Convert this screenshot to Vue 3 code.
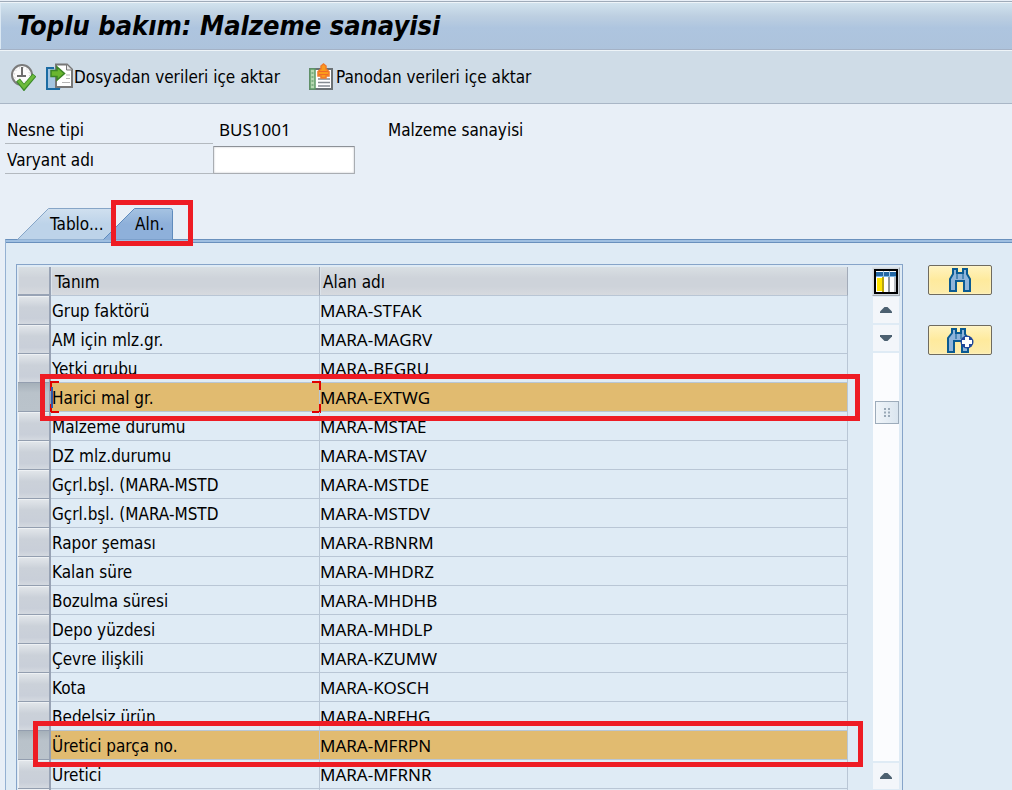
<script setup>
import { ref } from 'vue'

const variant = ref('')

const rows = [
  { name: 'Grup faktörü', field: 'MARA-STFAK' },
  { name: 'AM için mlz.gr.', field: 'MARA-MAGRV' },
  { name: 'Yetki grubu', field: 'MARA-BEGRU' },
  { name: 'Harici mal gr.', field: 'MARA-EXTWG', selected: true, focused: true, mark: 'mark-first' },
  { name: 'Malzeme durumu', field: 'MARA-MSTAE' },
  { name: 'DZ mlz.durumu', field: 'MARA-MSTAV' },
  { name: 'Gçrl.bşl. (MARA-MSTD', field: 'MARA-MSTDE' },
  { name: 'Gçrl.bşl. (MARA-MSTD', field: 'MARA-MSTDV' },
  { name: 'Rapor şeması', field: 'MARA-RBNRM' },
  { name: 'Kalan süre', field: 'MARA-MHDRZ' },
  { name: 'Bozulma süresi', field: 'MARA-MHDHB' },
  { name: 'Depo yüzdesi', field: 'MARA-MHDLP' },
  { name: 'Çevre ilişkili', field: 'MARA-KZUMW' },
  { name: 'Kota', field: 'MARA-KOSCH' },
  { name: 'Bedelsiz ürün', field: 'MARA-NRFHG' },
  { name: 'Üretici parça no.', field: 'MARA-MFRPN', selected: true, mark: 'mark-second' },
  { name: 'Üretici', field: 'MARA-MFRNR' },
  { name: '', field: '' }
]
</script>

<template>
  <div class="page">
    <header class="title-bar">
      <h1>Toplu bakım: Malzeme sanayisi</h1>
    </header>

    <div class="toolbar">
      <button type="button" class="tool" aria-label="Yürüt">
        <svg width="26" height="28" viewBox="0 0 26 28">
          <circle cx="12" cy="12" r="10" fill="#fbfbfb" stroke="#7b7b7b" stroke-width="2" />
          <circle cx="12" cy="12" r="7.500" fill="none" stroke="#c4c4c4" stroke-width="1" stroke-dasharray="1 3" />
          <path d="M12 4v9M7 13h9" fill="none" stroke="#6d6d6d" stroke-width="2" />
          <path d="M8 17l6 7.500L24.500 12" fill="none" stroke="#3b8a2b" stroke-width="5" />
          <path d="M8.500 17.500l5.500 6.500L24 12.500" fill="none" stroke="#6cbb3c" stroke-width="3" />
        </svg>
      </button>
      <button type="button" class="tool import-file">
        <svg width="28" height="28" viewBox="0 0 28 28">
          <path d="M1 5h9v19h5v2H1z" fill="#a5c6e2" />
          <path d="M8 5H1v21h13" fill="none" stroke="#1b6ba3" stroke-width="2" />
          <path d="M10 1.500h11l5 5V24H10z" fill="#fff" stroke="#777" stroke-width="2" />
          <path d="M20.500 1.500V7H26" fill="#e8e8e8" stroke="#777" stroke-width="1" />
          <path d="M20 12h4M20 15.500h4M16 19.500h8" stroke="#b5b5b5" stroke-width="1" />
          <path d="M5 7.500h6V4l7.500 6.500L11 17v-3.500H5z" fill="#6ab62f" stroke="#3b8526" stroke-width="1.500" />
        </svg>
        <span>Dosyadan verileri içe aktar</span>
      </button>
      <button type="button" class="tool import-clip">
        <svg width="28" height="28" viewBox="0 0 28 28">
          <path d="M2 6h22v20H2z" fill="#fff" stroke="#6b7275" stroke-width="2" />
          <path d="M2 6h5v20H2z" fill="#b7d9b1" stroke="#5d9a66" stroke-width="1.500" />
          <path d="M3.500 10h2M3.500 14h2M3.500 18h2M3.500 22h2" stroke="#4d8b58" stroke-width="1" />
          <path d="M10 16h12M10 19.500h12M10 23h12" stroke="#858b91" stroke-width="1.500" />
          <path d="M10 13V8.500l3-2.500V3l2.500-2L18 3v3l3 2.500V13h-3v2h-5v-2z" fill="#fb9b1b" stroke="#f17a29" stroke-width="1.500" />
          <path d="M11 8.500h9M11 11.500h9" stroke="#f06b26" stroke-width="1" />
        </svg>
        <span>Panodan verileri içe aktar</span>
      </button>
    </div>

    <main>
      <section class="form">
        <div class="label">Nesne tipi</div>
        <div class="value code">BUS1001</div>
        <div class="desc">Malzeme sanayisi</div>
        <label class="label" for="variant">Varyant adı</label>
        <input id="variant" v-model="variant" class="text-box" type="text" />
      </section>

      <nav class="tabs">
        <button type="button" class="tab tab-tables">
          <svg class="tab-shape" width="97" height="32" viewBox="0 0 97 32">
            <defs>
              <linearGradient id="idle" x1="0" y1="0" x2="0" y2="1">
                <stop offset="0" stop-color="#d0e0ef" />
                <stop offset="0.5" stop-color="#bdd3e9" />
                <stop offset="1" stop-color="#bdd3e9" />
              </linearGradient>
            </defs>
            <path d="M0.500 31.500L31.500 0.500H96.500V31.500" fill="url(#idle)" stroke="#86a5c7" />
          </svg>
          <span>Tablo...</span>
        </button>
        <button type="button" class="tab tab-fields">
          <svg class="tab-shape" width="70" height="32" viewBox="0 0 70 32">
            <defs>
              <linearGradient id="active" x1="0" y1="0" x2="0" y2="1">
                <stop offset="0" stop-color="#a6c3e2" />
                <stop offset="0.5" stop-color="#8eb0da" />
                <stop offset="1" stop-color="#8eb0da" />
              </linearGradient>
            </defs>
            <path d="M0.500 31.500L31.500 0.500H67.500Q69.500 0.500 69.500 2.500V31.500" fill="url(#active)" stroke="#5f8bbd" />
          </svg>
          <span>Aln.</span>
          <i class="mark mark-tab"></i>
        </button>
      </nav>

      <section class="panel">
        <div class="frame">
          <table>
            <colgroup>
              <col class="col-select" />
              <col class="col-name" />
              <col />
            </colgroup>
            <thead>
              <tr>
                <th class="corner"></th>
                <th>Tanım</th>
                <th>Alan adı</th>
              </tr>
            </thead>
            <tbody>
              <tr v-for="(row, i) in rows" :key="i" :class="{ selected: row.selected }">
                <td class="select-cell">
                  <button type="button" class="row-select" aria-label="Satır seç"></button>
                </td>
                <td>
                  {{ row.name }}
                  <svg v-if="row.focused" class="focus" viewBox="0 0 271 32" width="271" height="32">
                    <path d="M9 1H1v9M1 23v8h8M262 1h8v8M270 23v8h-8" fill="none" stroke="#e00000" stroke-width="2" />
                    <path d="M2 6v21" stroke="#3059a8" stroke-width="2" />
                  </svg>
                </td>
                <td class="code">
                  {{ row.field }}
                  <i v-if="row.mark" class="mark" :class="row.mark"></i>
                </td>
              </tr>
            </tbody>
          </table>

          <div class="scroller">
            <button type="button" class="config" aria-label="Tablo ayarları">
              <svg width="24" height="25" viewBox="0 0 24 25">
                <rect width="24" height="25" fill="#000" />
                <rect x="2" y="2" width="20" height="21" fill="#fff" />
                <rect x="2" y="3" width="20" height="5" fill="#2367a4" />
                <path d="M2 7.500h20" stroke="#79b7e8" />
                <rect x="3" y="9" width="5" height="13" fill="#ffe500" />
                <path d="M9 8v15" stroke="#b6a413" stroke-width="2" />
                <path d="M15 8v15" stroke="#8f959b" stroke-width="2" />
                <path d="M21 8v15" stroke="#b9bdc1" stroke-width="2" />
                <path d="M9.500 2v5M15.500 2v5" stroke="#9cc5e7" />
              </svg>
            </button>
            <button type="button" class="step" aria-label="Yukarı">
              <svg width="14" height="8" viewBox="0 0 14 8"><path d="M5.500 1h3l4.500 4.500V7H1V5.500z" fill="#4c6070" /></svg>
            </button>
            <button type="button" class="step" aria-label="Aşağı">
              <svg width="14" height="8" viewBox="0 0 14 8"><path d="M1 1h12v1.500L8.500 7h-3L1 2.500z" fill="#4c6070" /></svg>
            </button>
            <div class="track">
              <div class="thumb">
                <svg width="8" height="9" viewBox="0 0 8 9">
                  <path d="M2 0v9M6 0v9" stroke="#9aa9b7" stroke-width="2" stroke-dasharray="2 1.500" />
                </svg>
              </div>
            </div>
            <button type="button" class="step" aria-label="Yukarı">
              <svg width="14" height="8" viewBox="0 0 14 8"><path d="M5.500 1h3l4.500 4.500V7H1V5.500z" fill="#4c6070" /></svg>
            </button>
            <button type="button" class="step" aria-label="Aşağı">
              <svg width="14" height="8" viewBox="0 0 14 8"><path d="M1 1h12v1.500L8.500 7h-3L1 2.500z" fill="#4c6070" /></svg>
            </button>
          </div>
        </div>

        <div class="actions">
          <button type="button" class="find" aria-label="Bul">
            <svg width="24" height="26" viewBox="0 0 24 26">
              <path d="M5 2h4v4h6V2h4v5l3 5v12h-6V14H8v10H2V12l3-5z" fill="#8fb4da" stroke="#0a5a92" stroke-width="2" />
              <path d="M9 6v6M15 6v6" stroke="#0a5a92" stroke-width="1" />
            </svg>
          </button>
          <button type="button" class="find" aria-label="Sonrakini bul">
            <svg width="28" height="28" viewBox="0 0 28 28">
              <path d="M6 3h4v4h5V3h4v5l3 5v13h-6V15H8v11H2V12l4-5z" fill="#8fb4da" stroke="#0a5a92" stroke-width="2" />
              <path d="M10 7v6M15 7v6" stroke="#0a5a92" stroke-width="1" />
              <circle cx="21" cy="16" r="6.500" fill="#20479a" />
              <path d="M21 11v10M16 16h10" stroke="#fff" stroke-width="4" />
            </svg>
          </button>
        </div>
      </section>
    </main>
  </div>
</template>

<style>
body {
  margin: 0;
  overflow: hidden;
}
</style>

<style scoped>
.page {
  height: 100vh;
  overflow: hidden;
  display: flex;
  flex-direction: column;
  background: #e8eff7;
  color: #000;
  font-family: "DejaVu Sans Condensed", "Noto Sans", sans-serif;
  font-size: 17px;
  line-height: 20px;
}

button {
  margin: 0;
  padding: 0;
  border: 0;
  background: none;
  color: inherit;
  font: inherit;
}

svg {
  display: block;
  flex: none;
}

.code {
  font-family: "Noto Sans", sans-serif;
}

.title-bar {
  flex: none;
  display: flex;
  align-items: center;
  height: 47px;
  margin-top: 1px;
  padding-left: 17px;
  border-top: 1px solid #9fabb9;
  border-bottom: 1px solid #a4b2c6;
  background: linear-gradient(#d3e4ef, #bdcfe1 30%, #aec5df 55%, #adc3dc);
  box-shadow: inset 0 1px #eef4f9, inset 1px 0 #dbe8f3;
}

h1 {
  margin: 0;
  font-size: 27px;
  font-weight: bold;
  font-style: italic;
  line-height: 32px;
}

.toolbar {
  flex: none;
  box-sizing: border-box;
  display: flex;
  align-items: center;
  height: 54px;
  padding-left: 10px;
  border-top: 1px solid #eef4f8;
  border-bottom: 1px solid #a9b6c6;
  background: #cfdce7;
}

.tool {
  display: flex;
  align-items: center;
}

.import-file {
  margin-left: 10px;
}

.import-clip {
  margin-left: 28px;
}

main {
  flex: 1;
  display: flex;
  flex-direction: column;
}

.form {
  flex: none;
  display: grid;
  grid-template-columns: 208px 175px 1fr;
  grid-template-rows: 28px 28px;
  row-gap: 2px;
  padding: 12px 0 0 5px;
}

.label {
  box-sizing: border-box;
  padding: 4px 0 0 2px;
  border-bottom: 1px solid #b3b9bf;
}

.value {
  padding: 4px 0 0 6px;
}

.desc {
  padding-top: 4px;
}

.text-box {
  box-sizing: border-box;
  width: 142px;
  height: 28px;
  border: 1px solid #a9adb2;
  border-top-color: #8d9197;
  border-radius: 1px;
  background: #fff;
  box-shadow: inset 0 0 2px #b8bcc2;
  font: inherit;
  padding: 0 4px;
}

.tabs {
  flex: none;
  display: flex;
  height: 31px;
  margin: 34px 0 0 17px;
}

.tab {
  position: relative;
  height: 32px;
  text-align: left;
}

.tab span {
  position: relative;
}

.tab-shape {
  position: absolute;
  top: 0;
  left: 0;
}

.tab-tables {
  width: 97px;
  padding-left: 33px;
}

.tab-fields {
  width: 70px;
  margin-left: -11px;
  padding-left: 32px;
}

.mark {
  position: absolute;
  z-index: 5;
  border: 5px solid #ee1c24;
  pointer-events: none;
}

.mark-tab {
  top: -8px;
  right: -20px;
  bottom: -6px;
  left: 8px;
}

.mark-first {
  top: -9px;
  right: -12px;
  bottom: -9px;
  left: 22px;
}

.mark-second {
  top: -10px;
  right: -15px;
  bottom: -7px;
  left: 15px;
}

.panel {
  flex: 1;
  display: flex;
  align-items: flex-start;
  margin-left: 5px;
  padding: 22px 20px 0 10px;
  border-top: 1px solid #6990bd;
  border-left: 1px solid #94b1d2;
  background: linear-gradient(#9fbfe1, #9fbfe1 2px, #6990bd 2px, #6990bd 3px, #dfebf5 3px);
}

.frame {
  flex: 1;
  display: flex;
  align-items: stretch;
  margin-top: 2px;
  padding: 2px 2px 0 1px;
  border: 1px solid #86a4c9;
}

table {
  flex: 1;
  table-layout: fixed;
  width: 100%;
  border-collapse: separate;
  border-spacing: 0;
}

.col-select {
  width: 33px;
}

.col-name {
  width: 269px;
}

tr {
  position: relative;
}

th,
td {
  box-sizing: border-box;
  height: 29px;
  padding: 2px 0 0 1px;
  border-right: 1px solid #b9c6d5;
  border-bottom: 1px solid #b9c6d5;
  text-align: left;
  font-weight: normal;
  white-space: nowrap;
}

th {
  padding-left: 4px;
  border-right-color: #a2abb9;
  background: linear-gradient(#d9dfe3, #ced3da 40%, #ced3da 70%, #d7dadf);
  box-shadow: inset 1px 0 #dce3ea;
}

td:last-child {
  padding-left: 0;
}

th:last-child {
  padding-left: 3px;
}

.corner {
  border-right: 2px solid #98a3b5;
  border-bottom: 2px solid #98a3b5;
}

td.select-cell {
  padding: 0;
  border-right: 2px solid #98a3b5;
  border-bottom: 1px solid #939eaf;
}

.row-select {
  display: block;
  width: 100%;
  height: 28px;
  background: linear-gradient(#e3e7eb, #cbd1d9 40%, #c9cfd9 80%, #d4d9e0);
  box-shadow: inset 1px 1px #eef1f4;
}

.selected td {
  background: #e1bb70;
}

.selected .row-select {
  background: linear-gradient(#a5b0b9, #b9c2ca 35%, #bac3cb);
  box-shadow: none;
}

.focus {
  position: absolute;
  top: -2px;
  left: 32px;
}

.scroller {
  flex: none;
  display: flex;
  flex-direction: column;
  align-items: center;
  width: 28px;
  margin-left: 24px;
}

.config {
  box-sizing: border-box;
  display: flex;
  align-items: center;
  justify-content: center;
  width: 28px;
  height: 29px;
  border: 1px solid #dce1e5;
  border-right-color: #a5abb1;
  border-bottom-color: #a5abb1;
  background: #d0d7de;
}

.step {
  display: flex;
  align-items: center;
  justify-content: center;
  width: 26px;
  height: 26px;
  margin: 1px 0;
  background: #f3f6fa;
}

.track {
  flex: 1;
  box-sizing: border-box;
  width: 26px;
  margin: 1px 0;
  padding-top: 48px;
  padding-left: 2px;
  background: #fbfcfe;
}

.thumb {
  box-sizing: border-box;
  display: flex;
  align-items: center;
  justify-content: center;
  width: 24px;
  height: 23px;
  border: 1px solid #9dacbb;
  background: linear-gradient(90deg, #f0f5f9, #dae5ef);
}

.actions {
  flex: none;
  display: flex;
  flex-direction: column;
  gap: 30px;
  margin: 3px 0 0 25px;
}

.find {
  box-sizing: border-box;
  display: flex;
  align-items: center;
  justify-content: center;
  width: 64px;
  height: 30px;
  border: 1px solid #6f6b5f;
  border-radius: 2px;
  background: linear-gradient(#fff3c0, #feea9d 50%, #fcecac);
  box-shadow: inset 0 0 2px #fffbe0;
}
</style>
